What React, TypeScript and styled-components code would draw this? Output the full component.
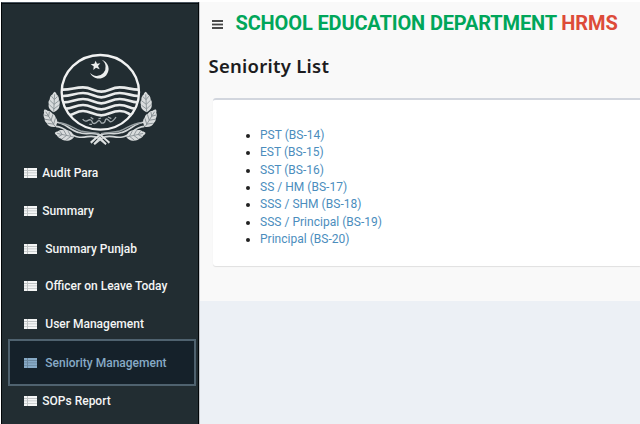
import React from "react";
import styled, { createGlobalStyle } from "styled-components";

interface IMenuItem {
  label: string;
  gap: number;
  active?: boolean;
}

const menuItems: IMenuItem[] = [
  { label: "Audit Para", gap: 5 },
  { label: "Summary", gap: 5 },
  { label: "Summary Punjab", gap: 8 },
  { label: "Officer on Leave Today", gap: 8 },
  { label: "User Management", gap: 8 },
  { label: "Seniority Management", gap: 8, active: true },
  { label: "SOPs Report", gap: 5 },
];

const grades = [
  "PST (BS-14)",
  "EST (BS-15)",
  "SST (BS-16)",
  "SS / HM (BS-17)",
  "SSS / SHM (BS-18)",
  "SSS / Principal (BS-19)",
  "Principal (BS-20)",
];

const GlobalStyle = createGlobalStyle`
  * {
    box-sizing: border-box;
  }
  body {
    margin: 0;
    background: #fff;
    font-family: Roboto, "Liberation Sans", sans-serif;
    overflow: hidden;
  }
`;

const Page = styled.div`
  display: flex;
  height: 424px;
  padding: 2px 0 0 1px;
`;

const Sidebar = styled.aside`
  width: 198px;
  flex: none;
  border: 1px solid #020608;
  border-top-color: #4a5560;
  border-bottom: none;
  background: #222d32;
  box-shadow: inset 0 1px #080e11, 1px 0 #c4c6ca;
`;

const CrestSvg = styled.svg`
  display: block;
  width: 140px;
  height: 110px;
  margin: 42px 0 -0.75px 28px;
`;

const Menu = styled.nav`
  display: flex;
  flex-direction: column;
`;

const MenuLink = styled.a<{ $active?: boolean; $gap: number }>`
  display: flex;
  align-items: center;
  gap: ${({ $gap }) => $gap}px;
  height: ${({ $active }) => ($active ? "47px" : "37.75px")};
  margin: ${({ $active }) => ($active ? "-4.1px 2px -4.1px 6px" : "0")};
  padding: ${({ $active }) => ($active ? "1px 0 0 14.3px" : "0 0 0 22.3px")};
  border: ${({ $active }) => ($active ? "2px solid #4f626f" : "none")};
  background: ${({ $active }) => ($active ? "#15212a" : "transparent")};
  color: ${({ $active }) => ($active ? "#87aac6" : "#f4f5f5")};
  font-size: 12px;
  font-weight: 500;
  white-space: nowrap;
`;

const Main = styled.main`
  flex: 1;
  min-width: 0;
  margin-left: 1px;
  background: #ecf0f5;
`;

const Content = styled.section`
  height: 299px;
  background: #f9f9f9;
`;

const Header = styled.header`
  display: flex;
  align-items: center;
  height: 41px;
  padding-left: 12px;
`;

const BarsSvg = styled.svg`
  width: 11px;
  height: 9px;
  margin-top: 3px;
`;

const Brand = styled.h1`
  margin: 0 0 0 12.5px;
  color: #00a65a;
  font-size: 20px;
  font-weight: 700;
  letter-spacing: -0.14px;
  white-space: nowrap;
  span {
    color: #dd4b39;
  }
`;

const Title = styled.h2`
  margin: 8.5px 0 0 8.5px;
  color: #1c1c20;
  font-family: "Noto Sans", sans-serif;
  font-size: 18.5px;
  font-weight: 600;
  letter-spacing: 0.25px;
  line-height: 28px;
`;

const Box = styled.div`
  height: 168px;
  margin: 18.5px 0 0 12.5px;
  padding-top: 27px;
  border-top: 2px solid #d2d6de;
  border-radius: 3px 0 0 3px;
  background: #fff;
  box-shadow: 0 1px 1px rgba(0, 0, 0, 0.1);
`;

const GradeList = styled.ul`
  margin: 0;
  padding-left: 47.5px;
  color: #222;
  font-size: 12px;
  line-height: 17.35px;
  letter-spacing: 0.02px;
  a {
    color: #4b8dbd;
  }
`;

const BarsIcon = () => (
  <BarsSvg viewBox="0 0 11 9">
    <path d="M0 1h11M0 8h11" stroke="#111" strokeWidth="1.7" />
    <path d="M0 4.5h11" stroke="#444" strokeWidth="1.8" />
  </BarsSvg>
);

const ListIcon = () => (
  <svg width="13" height="10" viewBox="0 0 13 10" fill="currentColor">
    <rect width="13" height="10" opacity="0.75" />
    <path d="M0 0h3v2H0zM4 0h9v2H4zM0 3h3v1.5H0zM4 3h9v1.5H4zM0 5.2h3v2H0zM4 5.2h9v2H4zM0 8h3v2H0zM4 8h9v2H4z" />
  </svg>
);

// one ear of wheat, standing upright with its base at 0,0
const Ear = ({ transform }: { transform: string }) => (
  <g transform={transform}>
    <path
      d="M0 0C-12-6-18-14-16-24c-2-6-1-10 2-14 0-8 4-14 8-16 1-4 3-6 6-8 3 2 5 4 6 8 4 2 8 8 8 16 3 4 4 8 2 14C18-14 12-6 0 0z"
      fill="#d9dcdd"
    />
    <path
      d="M0-2v-52M-14-22L0-10l14-12M-14-36L0-24l14-12M-9-48L0-38l9-10"
      fill="none"
      stroke="#858e92"
      strokeWidth="2.5"
    />
  </g>
);

const Wheat = () => (
  <g>
    <path
      d="M72 232c28-4 46 22 72 30 28 10 44-4 66 8 14 8 18 16 28 24M78 244c32 2 40 28 66 32 28 4 40-10 62 4l22 18"
      fill="none"
      stroke="#d3d7d8"
      strokeWidth="5"
    />
    <path d="M86 234c26-2 46 18 66 24 22 6 36 2 56 8" fill="none" stroke="#98a0a3" strokeWidth="4" />
    <Ear transform="translate(71 202) rotate(3)" />
    <Ear transform="translate(76 246) rotate(-32)" />
    <Ear transform="translate(132 276) rotate(-78) scale(0.95)" />
  </g>
);

const Crest = () => (
  <CrestSvg viewBox="0 0 420 330">
    <Wheat />
    <g transform="translate(421 0) scale(-1 1)">
      <Wheat />
    </g>
    <ellipse cx="211" cy="142" rx="116" ry="112" fill="#222d32" stroke="#f1f2f2" strokeWidth="7" />
    <path d="M215 44A29 29 0 1 1 180 83A26.5 26.5 0 1 0 215 44z" fill="#eceeee" />
    <path d="M197 47l4 9 10-1-7 8 5 10-11-5-8 7 1-11-9-6 11-2z" fill="#eceeee" />
    <g fill="none" stroke="#e9ebeb" strokeWidth="8">
      <path d="M99 134c26 0 35-7 60-7s34 13 55 13 30-13 55-13 34 7 55 7" />
      <path d="M99 153c26 0 35-9 60-9s34 13 55 13 30-13 55-13 34 9 55 9" />
      <path d="M101 172c24 0 33-10 58-10s34 13 55 13 30-13 55-13 32 10 53 10" />
      <path d="M108 191c18 0 28-11 51-11s34 13 55 13 30-13 55-13 28 11 47 11" />
      <path d="M120 210c12-2 20-12 39-12s34 13 55 13 30-13 55-13 24 10 36 12" />
    </g>
    <path
      d="M158 222q6 10 16 4t14 8q8 4 14-4t12 4q10 2 12-8t14 4q8 2 18-14M182 217l8 6M205 222l8-3M234 216l10 5M178 238h8"
      fill="none"
      stroke="#a3abae"
      strokeWidth="4"
    />
    <path d="M182 292l24-20M192 297l20-21M238 292l-24-20M228 297l-20-21" stroke="#dfe2e2" strokeWidth="5" />
  </CrestSvg>
);

export default () => {
  return (
    <Page>
      <GlobalStyle />
      <Sidebar>
        <Crest />
        <Menu>
          {menuItems.map(item => (
            <MenuLink key={item.label} $active={item.active} $gap={item.gap}>
              <ListIcon />
              {item.label}
            </MenuLink>
          ))}
        </Menu>
      </Sidebar>
      <Main>
        <Content>
          <Header>
            <BarsIcon />
            <Brand>
              SCHOOL EDUCATION DEPARTMENT <span>HRMS</span>
            </Brand>
          </Header>
          <Title>Seniority List</Title>
          <Box>
            <GradeList>
              {grades.map(grade => (
                <li key={grade}>
                  <a>{grade}</a>
                </li>
              ))}
            </GradeList>
          </Box>
        </Content>
      </Main>
    </Page>
  );
};
